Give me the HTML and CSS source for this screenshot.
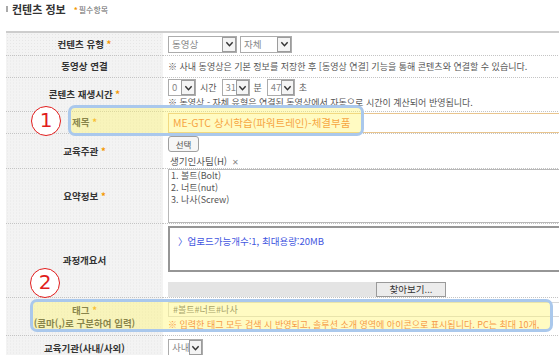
FILE: index.html
```html
<!DOCTYPE html>
<html lang="ko">
<head>
    <meta charset="UTF-8">
    <meta name="viewport" content="width=device-width, initial-scale=1.0">
    <title>컨텐츠 정보</title>
    <link rel="stylesheet" href="styles.css">
</head>
<body>

<div class="page">
    <!-- 제목 영역 -->
    <div class="section-title">
        <span class="bar"></span>
        <h2>컨텐츠 정보</h2>
        <span class="req"><b>*</b>필수항목</span>
    </div>

    <table class="form">
        <tr class="r-type">
            <th>컨텐츠 유형 <i>*</i></th>
            <td>
                <div class="cell">
                    <span class="sel sel-video"><span class="sel-val">동영상</span><span class="sel-btn"><svg viewBox="0 0 10 8"><path d="M1.5 2 L5 5.8 L8.5 2"/></svg></span></span>
                    <span class="sel sel-self"><span class="sel-val">자체</span><span class="sel-btn"><svg viewBox="0 0 10 8"><path d="M1.5 2 L5 5.8 L8.5 2"/></svg></span></span>
                </div>
            </td>
        </tr>
        <tr class="r-link">
            <th>동영상 연결</th>
            <td><div class="cell note">※ 사내 동영상은 기본 정보를 저장한 후 [동영상 연결] 기능을 통해 콘텐츠와 연결할 수 있습니다.</div></td>
        </tr>
        <tr class="r-time">
            <th>콘텐츠 재생시간 <i>*</i></th>
            <td>
                <div class="cell col">
                    <div class="time-line">
                        <span class="sel sel-num"><span class="sel-val">0</span><span class="sel-btn"><svg viewBox="0 0 10 8"><path d="M1.5 2 L5 5.8 L8.5 2"/></svg></span></span>
                        <span class="unit">시간</span>
                        <span class="sel sel-num"><span class="sel-val">31</span><span class="sel-btn"><svg viewBox="0 0 10 8"><path d="M1.5 2 L5 5.8 L8.5 2"/></svg></span></span>
                        <span class="unit">분</span>
                        <span class="sel sel-num"><span class="sel-val">47</span><span class="sel-btn"><svg viewBox="0 0 10 8"><path d="M1.5 2 L5 5.8 L8.5 2"/></svg></span></span>
                        <span class="unit">초</span>
                    </div>
                    <div class="note">※ 동영상 - 자체 유형은 연결된 동영상에서 자동으로 시간이 계산되어 반영됩니다.</div>
                </div>
            </td>
        </tr>
        <tr class="r-title">
            <th>제목 <i>*</i></th>
            <td><div class="cell"><div class="text-input title-input">ME-GTC 상시학습(파워트레인)-체결부품</div></div></td>
        </tr>
        <tr class="r-org">
            <th>교육주관 <i>*</i></th>
            <td>
                <div class="cell col">
                    <span class="btn-small">선택</span>
                    <div class="org-item">생기인사팀(H) <span class="x">✕</span></div>
                </div>
            </td>
        </tr>
        <tr class="r-summary">
            <th>요약정보 <i>*</i></th>
            <td>
                <div class="cell">
                    <div class="textarea">1. 볼트(Bolt)<br>2. 너트(nut)<br>3. 나사(Screw)</div>
                </div>
            </td>
        </tr>
        <tr class="r-outline">
            <th>과정개요서</th>
            <td>
                <div class="cell col">
                    <div class="upload-box">〉업로드가능개수:1, 최대용량:20MB</div>
                    <div class="file-line">
                        <span class="file-path"></span>
                        <span class="file-btn">찾아보기...</span>
                    </div>
                </div>
            </td>
        </tr>
        <tr class="r-tag">
            <th>태그 <i>*</i><br>(콤마(,)로 구분하여 입력)</th>
            <td>
                <div class="cell col">
                    <div class="text-input tag-input">#볼트#너트#나사</div>
                    <div class="warn">※ 입력한 태그 모두 검색 시 반영되고, 솔루션 소개 영역에 아이콘으로 표시됩니다. PC는 최대 10개,</div>
                </div>
            </td>
        </tr>
        <tr class="r-inst">
            <th>교육기관(사내/사외)</th>
            <td>
                <div class="cell">
                    <span class="sel sel-inout"><span class="sel-val">사내</span><span class="sel-btn"><svg viewBox="0 0 10 8"><path d="M1.5 2 L5 5.8 L8.5 2"/></svg></span></span>
                </div>
            </td>
        </tr>
    </table>

    <!-- 강조 표시 -->
    <div class="hl hl-title"></div>
    <div class="hl hl-tag"></div>
    <div class="mark mark-1">1</div>
    <div class="mark mark-2">2</div>
</div>

</body>
</html>
```

FILE: styles.css
```css
body {
    margin: 0;
    background-color: #fff;
    font-family: "Noto Sans CJK KR", "Noto Sans", sans-serif;
    font-size: 9px;
    color: #555;
    overflow: hidden;
}
.page {
    position: relative;
    width: 559px;
    height: 355px;
    overflow: hidden;
}
.section-title {
    display: flex;
    align-items: center;
    height: 31px;
    padding-left: 6px;
    padding-bottom: 13px;
    box-sizing: border-box;
}
.section-title .bar {
    width: 2px;
    height: 6px;
    background-color: #aaa;
    margin-right: 4px;
}
.section-title h2 {
    margin: 0;
    font-size: 11px;
    font-weight: bold;
    color: #333;
}
.section-title .req {
    margin-left: 8px;
    font-size: 8px;
    color: #666;
}
.section-title .req b {
    color: #f39800;
    margin-right: 1px;
}
.form {
    margin-left: 6px;
    width: 620px;
    border-collapse: collapse;
    border-top: 2px solid #cdcdcd;
    table-layout: fixed;
}
.form th {
    width: 157px;
    padding: 0;
    background-color: #f3f3f3;
    background-image: radial-gradient(#e6e6e6 0.6px, transparent 0.7px);
    background-size: 3px 3px;
    font-size: 9.5px;
    font-weight: bold;
    color: #333;
    text-align: center;
    line-height: 13px;
    border-bottom: 1px dotted #c4c4c4;
}
.form th i {
    font-style: normal;
    color: #f39800;
}
.form td {
    padding: 0 0 0 5px;
    border-bottom: 1px dotted #c4c4c4;
    vertical-align: top;
    white-space: nowrap;
    line-height: 13px;
}
/* 각 행의 높이는 셀 안의 상자로 고정 */
.cell {
    display: flex;
    align-items: center;
    overflow: visible;
}
.cell.col {
    flex-direction: column;
    align-items: stretch;
}
.r-type .cell { height: 22px; }
.r-link .cell { height: 21px; }
.r-time .cell { height: 33px; }
.r-title .cell { height: 21px; }
.r-org .cell { height: 34px; }
.r-summary .cell { height: 54px; }
.r-outline .cell { height: 73px; }
.r-tag .cell { height: 37px; }
.r-inst .cell { height: 24px; align-items: flex-start; }

/* 선택 상자 */
.sel {
    display: inline-flex;
    flex: none;
    height: 17px;
    border: 1px solid #acacac;
    background-color: #fff;
    box-sizing: border-box;
}
.sel-val {
    flex: 1;
    padding-left: 3px;
    color: #888;
    font-size: 9.5px;
    line-height: 15px;
}
.sel-btn {
    width: 14px;
    border: 1px solid #9c9c9c;
    background-color: #f4f4f4;
    display: flex;
    align-items: center;
    justify-content: center;
    box-sizing: border-box;
}
.sel-btn svg {
    width: 9px;
    height: 8px;
    fill: none;
    stroke: #333;
    stroke-width: 1.6;
}
.sel-video { width: 69px; }
.sel-self { width: 52px; margin-left: 3px; }
.sel-num { width: 28px; }
.sel-inout { width: 35px; margin-top: 3px; }

.note {
    color: #555;
    font-size: 9px;
}
.time-line {
    display: flex;
    align-items: center;
    margin-top: 1px;
    height: 17px;
}
.time-line .unit {
    margin: 0 5px 0 4px;
    color: #555;
}
.r-time .note {
    margin-top: 0;
    line-height: 13px;
}

/* 입력 상자 */
.text-input {
    border: 1px solid #d8d8d8;
    box-sizing: border-box;
    padding-left: 4px;
}
.title-input {
    flex: 1;
    height: 20px;
    line-height: 18px;
    font-size: 10.5px;
    color: #f06a23;
    border-color: #e9c58e;
}
.btn-small {
    align-self: flex-start;
    margin-top: 2px;
    width: 31px;
    height: 16px;
    line-height: 14px;
    box-sizing: border-box;
    border: 1px solid #a0a0a0;
    border-radius: 3px;
    background-color: #f6f6f6;
    text-align: center;
    color: #555;
    font-size: 8.5px;
}
.org-item {
    margin-top: 2px;
    padding-left: 2px;
    font-size: 9.5px;
    color: #555;
    line-height: 14px;
}
.org-item .x {
    color: #888;
    font-size: 8px;
    margin-left: 2px;
}
.textarea {
    flex: 1;
    align-self: stretch;
    box-sizing: border-box;
    border: 1px solid #b8b8b8;
    border-right: none;
    padding: 0 2px;
    font-size: 9px;
    line-height: 12px;
    color: #555;
}
.upload-box {
    margin-top: 2px;
    height: 47px;
    box-sizing: border-box;
    border: 2px solid #969696;
    border-right: none;
    padding: 7px 0 0 8px;
    color: #4256e0;
    font-size: 9.5px;
}
.file-line {
    display: flex;
    margin-top: 10px;
    height: 15px;
}
.file-path {
    width: 208px;
    background-color: #e4e4e4;
    background-image: radial-gradient(#d0d0d0 0.6px, transparent 0.7px);
    background-size: 2px 2px;
}
.file-btn {
    width: 70px;
    box-sizing: border-box;
    border: 1px solid #9a9a9a;
    background-color: #ececec;
    text-align: center;
    line-height: 13px;
    font-size: 9.5px;
    color: #333;
}
.tag-input {
    margin-top: 4px;
    height: 15px;
    line-height: 13px;
    font-size: 9px;
    color: #666;
}
.warn {
    margin-top: 1px;
    color: #f0572a;
    font-size: 9px;
    line-height: 13px;
}

/* 강조 표시 */
.hl {
    position: absolute;
    border: 3px solid #aac8ec;
    border-radius: 7px;
    background-color: rgba(255, 246, 110, 0.42);
    box-sizing: border-box;
}
.hl-title {
    left: 68px;
    top: 105px;
    width: 296px;
    height: 31px;
}
.hl-tag {
    left: 30px;
    top: 299px;
    width: 523px;
    height: 33px;
}
.mark {
    position: absolute;
    width: 30px;
    height: 30px;
    box-sizing: border-box;
    border: 1.5px solid #e11d1d;
    border-radius: 50%;
    color: #e11d1d;
    font-family: "DejaVu Sans", sans-serif;
    font-size: 20px;
    line-height: 27px;
    text-align: center;
    background-color: #fff;
}
.mark-1 {
    left: 31px;
    top: 106px;
}
.mark-2 {
    left: 30px;
    top: 268px;
}
```
